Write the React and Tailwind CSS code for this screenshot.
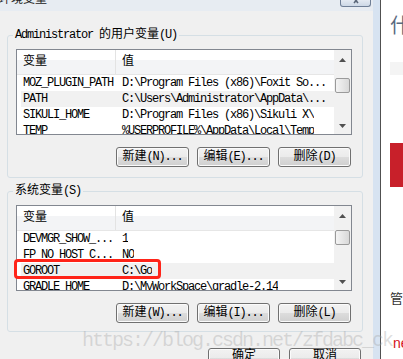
import React from 'react';

const userVars = [
  ['MOZ_PLUGIN_PATH', 'D:\\Program Files (x86)\\Foxit So...'],
  ['PATH', 'C:\\Users\\Administrator\\AppData\\...'],
  ['SIKULI_HOME', 'D:\\Program Files (x86)\\Sikuli X\\'],
  ['TEMP', '%USERPROFILE%\\AppData\\Local\\Temp'],
];

const sysVars = [
  ['DEVMGR_SHOW_...', '1'],
  ['FP_NO_HOST_C...', 'NO'],
  ['GOROOT', 'C:\\Go'],
  ['GRADLE_HOME', 'D:\\MyWorkSpace\\gradle-2.14'],
];

const ASCII = /^[\x20-\x7e]+$/;

// ascii runs get squeezed to 6px per char, like the SimSun bitmap font
function Txt({ s }) {
  return s
    .split(/([\x20-\x7e]+)/)
    .filter(Boolean)
    .map((p, i) =>
      ASCII.test(p) ? (
        <span key={i} className="tracking-[-1.2px]">{p}</span>
      ) : (
        <span key={i}>{p}</span>
      )
    );
}

function Arrow({ up }) {
  return (
    <svg width="7" height="4" viewBox="0 0 7 4">
      <path d={up ? 'M0 4L3.5 0L7 4Z' : 'M0 0L3.5 4L7 0Z'} fill="#505050" />
    </svg>
  );
}

function ScrollBar({ thumbClass }) {
  return (
    <div className="w-[17px] flex flex-col bg-[#f1f1f1]">
      <div className="h-[17px] flex items-center justify-center pt-[2px]">
        <Arrow up />
      </div>
      <div className="flex-1">
        <div className={thumbClass} />
      </div>
      <div className="h-[17px] flex items-center justify-center">
        <Arrow />
      </div>
    </div>
  );
}

function VarList({ rows, selected, thumbClass, mark }) {
  return (
    <div className="relative ml-[8px] mt-[7px] w-[336px]">
      <div className="h-[86px] border border-[#828790] bg-white flex overflow-hidden">
        <div className="flex-1 flex flex-col min-w-0">
          <div className="h-[25px] shrink-0 flex border-b border-[#e6e6e6] bg-[linear-gradient(#ffffff_0%,#ffffff_42%,#f3f4f6_42%,#f3f4f6_100%)]">
            <div className="w-[99px] pl-[6px] border-r border-[#e3e3e3] flex items-center">
              <Txt s="变量" />
            </div>
            <div className="pl-[6px] flex items-center">
              <Txt s="值" />
            </div>
          </div>
          {rows.map(([name, value], i) => (
            <div key={name} className="h-[16px] shrink-0 flex">
              <div
                className={
                  i === selected
                    ? 'ml-[4px] flex-1 flex bg-[#f1f1f1]'
                    : 'ml-[4px] flex-1 flex'
                }
              >
                <div className="w-[95px] pl-[2px] leading-[16px] whitespace-pre overflow-hidden">
                  <Txt s={name} />
                </div>
                <div className="pl-[6px] leading-[16px] whitespace-pre overflow-hidden">
                  <Txt s={value} />
                </div>
              </div>
            </div>
          ))}
        </div>
        <ScrollBar thumbClass={thumbClass} />
      </div>
      {mark && (
        <div className="absolute left-[-2px] top-[54px] w-[147px] h-[20px] border-[3px] border-[#ff2419] rounded-[4px]" />
      )}
    </div>
  );
}

function Btn({ label, bottom }) {
  return (
    <div
      className={
        bottom
          ? 'w-[72px] h-[20px] rounded-[3px] border border-[#707070] shadow-[inset_0_0_0_1px_#fbfbfb] bg-[linear-gradient(#f2f2f2_0%,#ebebeb_50%,#dddddd_50%,#cfcfcf_100%)] flex items-center justify-center pb-[5px] leading-none whitespace-pre'
          : 'w-[73px] h-[20px] rounded-[3px] border border-[#707070] shadow-[inset_0_0_0_1px_#fbfbfb] bg-[linear-gradient(#f2f2f2_0%,#ebebeb_50%,#dddddd_50%,#cfcfcf_100%)] flex items-center justify-center leading-none whitespace-pre'
      }
    >
      <Txt s={label} />
    </div>
  );
}

function Group({ title, children, className }) {
  return (
    <fieldset className={className}>
      <legend className="ml-[5px] px-[2px] leading-[14px] whitespace-pre">
        <Txt s={title} />
      </legend>
      {children}
    </fieldset>
  );
}

export default function App() {
  return (
    <div className="relative w-[403px] h-[359px] flex overflow-hidden text-[12px] text-black font-['Liberation_Mono','Noto_Sans_CJK_SC',monospace]">
      <div className="w-[373px] flex flex-col">
        <div className="h-[11px] shrink-0 bg-[#e7ecf2] flex items-start overflow-hidden">
          <div className="-mt-[8px] -ml-[1px] leading-[12px] text-[#222] font-['Noto_Sans_CJK_SC',sans-serif]">
            环境变量
          </div>
          <div className="flex-1" />
          <div className="mr-[2px] w-[31px] h-[7px] border border-t-0 border-[#6f7f96] rounded-b-[3px] bg-[linear-gradient(#e4eaf2,#cdd8e6)] flex justify-center overflow-hidden">
            <svg width="12" height="6" viewBox="0 0 12 6">
              <path d="M2 -4L8 3M10 -4L4 3" stroke="#5a6678" strokeWidth="1.6" fill="none" />
            </svg>
          </div>
        </div>

        <div className="flex-1 bg-[#f0f0f0] pl-[7px] flex flex-col">
          <Group
            title="Administrator 的用户变量(U)"
            className="mt-[17px] w-[356px] min-w-0 border border-[#d5dfe5] rounded-[3px] pb-[10px]"
          >
            <VarList
              rows={userVars}
              selected={1}
              thumbClass="mt-[11px] ml-[1px] w-[15px] h-[15px] rounded-[2px] border border-[#9a9a9a] bg-[linear-gradient(90deg,#f4f4f4,#d8d8d8)]"
            />
            <div className="mt-[12px] pr-[11px] flex justify-end gap-[8px]">
              <Btn label="新建(N)..." />
              <Btn label="编辑(E)..." />
              <Btn label="删除(D)" />
            </div>
          </Group>

          <Group
            title="系统变量(S)"
            className="mt-[6px] w-[356px] min-w-0 border border-[#d5dfe5] rounded-[3px] pb-[8px]"
          >
            <VarList
              rows={sysVars}
              selected={2}
              mark
              thumbClass="mt-[7px] ml-[1px] w-[15px] h-[15px] rounded-[2px] border border-[#9a9a9a] bg-[linear-gradient(90deg,#f4f4f4,#d8d8d8)]"
            />
            <div className="mt-[12px] pr-[11px] flex justify-end gap-[8px]">
              <Btn label="新建(W)..." />
              <Btn label="编辑(I)..." />
              <Btn label="删除(L)" />
            </div>
          </Group>

          <div className="mt-[16px] w-[356px] pr-[2px] flex justify-end gap-[9px]">
            <Btn label="确定" bottom />
            <Btn label="取消" bottom />
          </div>
        </div>
      </div>

      <div className="w-[7px] shrink-0 bg-[#d7e3f1]" />
      <div className="w-[1px] shrink-0 bg-[#505050]" />

      <div className="flex-1 bg-white flex flex-col pl-[9px] overflow-hidden font-['Noto_Sans_CJK_SC',sans-serif]">
        <div className="mt-[14px] h-[22px] text-[20px] leading-[22px] text-[#5a6a80] whitespace-nowrap">什么</div>
        <div className="mt-[26px] h-[13px] bg-[#f4f4f4]" />
        <div className="mt-[68px] h-[44px] bg-[#c8202a]" />
        <div className="mt-[104px] h-[13px] text-[13px] leading-[13px] text-[#333] whitespace-nowrap">管理</div>
        <div className="mt-[32px] ml-[3px] text-[14px] leading-[14px] text-[#d4141c] whitespace-nowrap font-['Liberation_Sans',sans-serif]">
          net
        </div>
      </div>

      <div className="absolute left-[82px] top-[331px] text-[20px] leading-[20px] tracking-[-2px] text-[#a0a0a0]/35 whitespace-pre font-['Liberation_Mono',monospace] pointer-events-none">
        https://blog.csdn.net/zfdabc_ck
      </div>
    </div>
  );
}
